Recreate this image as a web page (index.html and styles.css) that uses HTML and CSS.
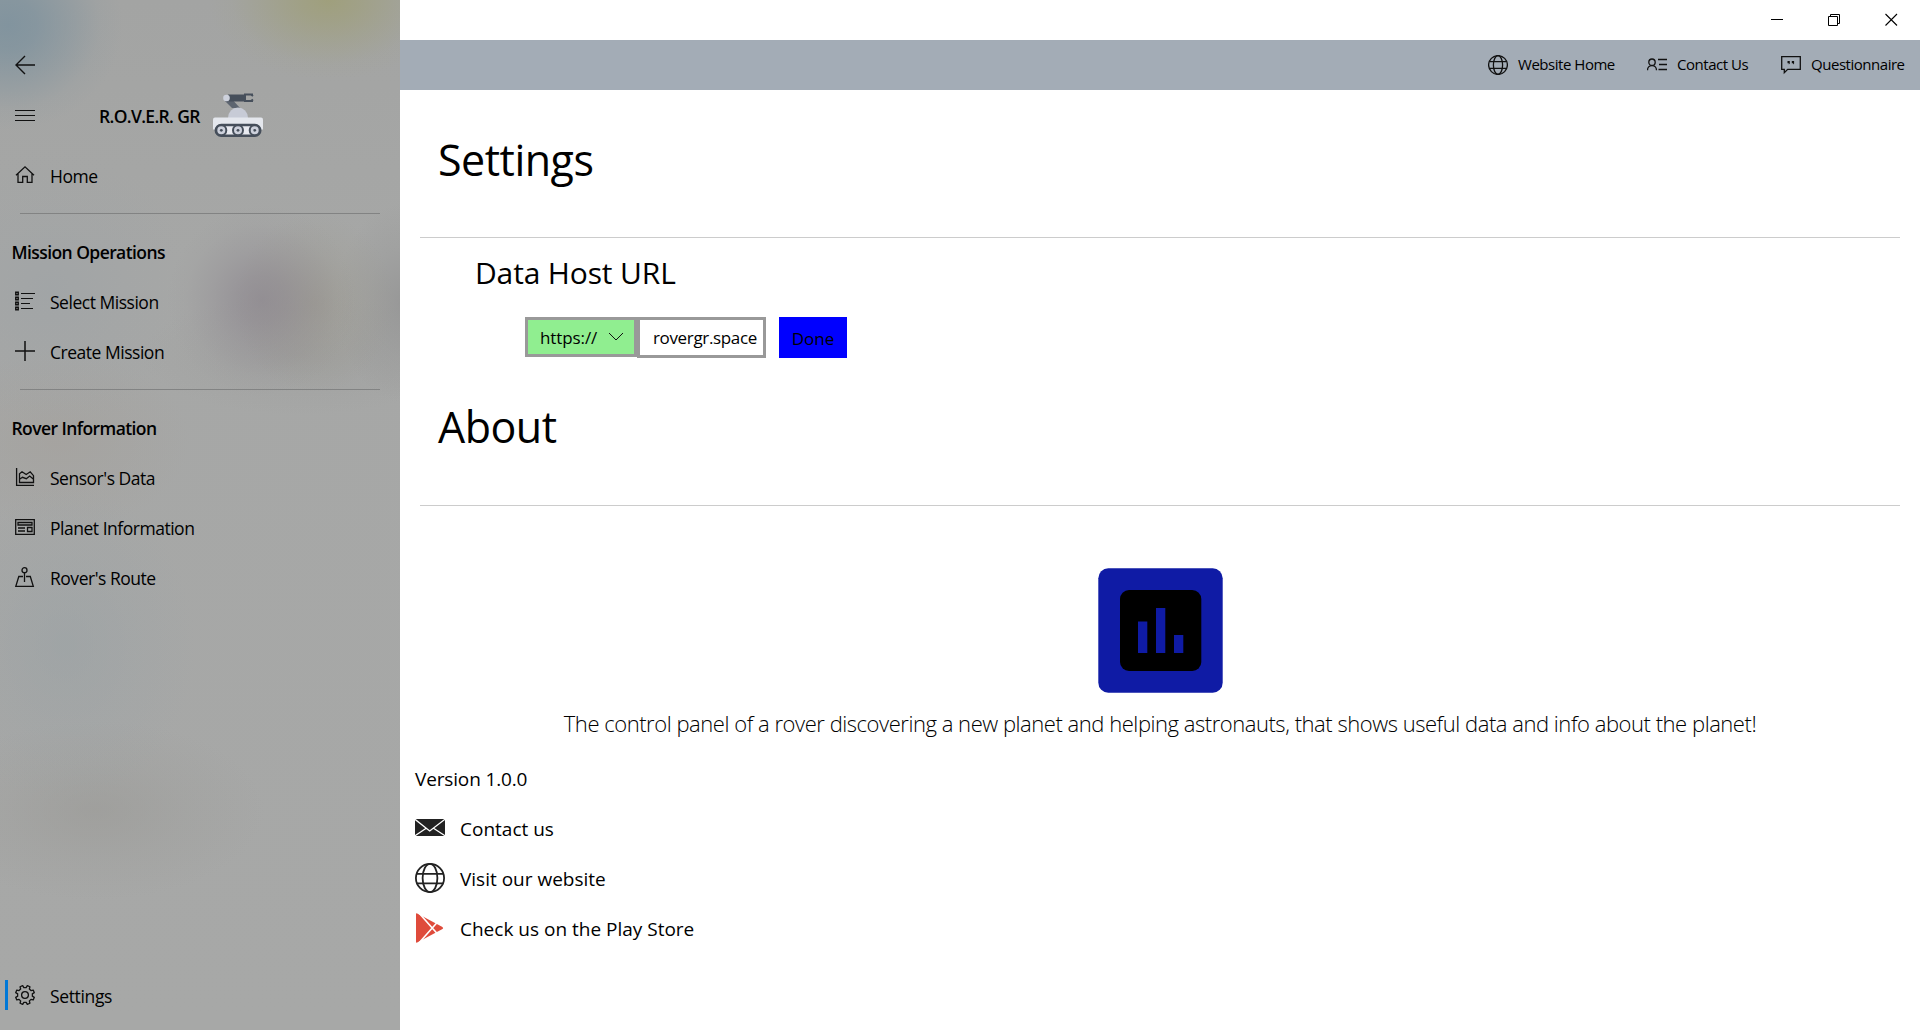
FILE: index.html
```html
<!DOCTYPE html>
<html lang="en">
<head>
<meta charset="utf-8">
<title>R.O.V.E.R. GR</title>
<link rel="stylesheet" href="styles.css">
</head>
<body>
<aside class="sidebar">
  <button class="icon-row back" aria-label="Back"><svg width="20" height="20" viewBox="0 0 20 20"><path d="M1 10H20M10 1L1 10l9 9" stroke-width="1.4"/></svg></button>
  <div class="brand">
    <svg width="20" height="20" viewBox="0 0 20 20"><path d="M0 4.500H20M0 9.500H20M0 14.500H20" stroke-width="1.200"/></svg>
    <span class="brand-name">R.O.V.E.R. GR</span>
    <svg class="rover" width="50" height="44" viewBox="0 0 50 44">
      <path d="M12 8l5-4 10 11h-8z" fill="#5d6570" stroke="none"/>
      <path d="M15 1.500h16v7H16z" fill="#464f5b" stroke="none"/>
      <path d="M40 1.500h-8v6.500h8M38 1.500l2 1.500M38 8l2-1.500" stroke="#464f5b" stroke-width="2"/>
      <circle cx="13.500" cy="5" r="3.300" fill="#cdd1dc" stroke="none"/>
      <path d="M15 25a10 10.500 0 0 1 20 0z" fill="#c7cbd6" stroke="none"/>
      <path d="M2 24.500h46q2 0 2 2v10H0v-10q0-2 2-2z" fill="#e4e7ed" stroke="none"/>
      <rect x="2.800" y="32" width="44.500" height="10.800" rx="5.400" fill="#e8eaf0" stroke="#464f5b" stroke-width="2.400"/>
      <g fill="#cdd1dc" stroke="#464f5b" stroke-width="2"><circle cx="8.300" cy="37.300" r="5"/><circle cx="25" cy="37.300" r="5"/><circle cx="41.700" cy="37.300" r="5"/></g>
      <g fill="#464f5b" stroke="none"><circle cx="8.300" cy="37.300" r="1.400"/><circle cx="25" cy="37.300" r="1.400"/><circle cx="41.700" cy="37.300" r="1.400"/></g>
    </svg>
  </div>
  <nav class="nav">
    <a class="nav-item"><svg width="20" height="20" viewBox="0 0 20 20"><path d="M1 10.200L10 1.800l9 8.400M3 8.700V17.400H7.700V11.500H12.300V17.400H17V8.700"/></svg>Home</a>
    <hr class="nav-line">
    <h2 class="nav-heading">Mission Operations</h2>
    <a class="nav-item"><svg width="20" height="20" viewBox="0 0 20 20"><path d="M6 2.500H20M6 7.500H18M6 12.500H15M6 17.500H18" stroke-width="1.200"/><path d="M.8 1.300h2.400v2.400H.8zM.8 6.300h2.400v2.400H.8zM.8 11.300h2.400v2.400H.8zM.8 16.300h2.400v2.400H.8z" stroke-width="1.500"/></svg>Select Mission</a>
    <a class="nav-item"><svg width="20" height="20" viewBox="0 0 20 20"><path d="M0 10H20M10 0V20" stroke-width="1.500"/></svg>Create Mission</a>
    <hr class="nav-line">
    <h2 class="nav-heading">Rover Information</h2>
    <a class="nav-item"><svg width="20" height="20" viewBox="0 0 20 20"><path d="M1.600 1V18.300H19M4.500 15.500V6.700L7 4.800l4.200 2.700 4-2.700 3.300 3.900V15.500zM4.500 12.300l3-2 3.800 1.400L14.700 9l3.800 3.200"/></svg>Sensor's Data</a>
    <a class="nav-item"><svg width="20" height="20" viewBox="0 0 20 20"><path d="M.7 2.700H19.300V17.300H.7zM3 5.500H17V8H3zM3 11H10M3 14H10M12.500 10.500H17V14.500H12.500z" stroke-width="1.300"/></svg>Planet Information</a>
    <a class="nav-item"><svg width="20" height="20" viewBox="0 0 20 20"><circle cx="9.500" cy="3.200" r="2.500"/><path d="M9.500 5.700V15M8 9.500H3.800L.8 19.300H18.300L15.300 9.500H11"/></svg>Rover's Route</a>
  </nav>
  <a class="nav-item selected"><svg width="20" height="20" viewBox="-10 -10 20 20"><path stroke-linejoin="round" d="M2.320-9.310L4.940-8.230 4.350-5.990Q5.200-5.200 5.990-4.350L8.230-4.940 9.310-2.320 7.310-1.160Q7.500 0 7.310 1.160L9.310 2.320 8.230 4.940 5.990 4.350Q5.200 5.200 4.350 5.990L4.940 8.230 2.320 9.310 1.160 7.310Q0 7.500-1.160 7.310L-2.320 9.310-4.940 8.230-4.350 5.990Q-5.200 5.200-5.990 4.350L-8.230 4.940-9.310 2.320-7.310 1.160Q-7.500 0-7.310-1.160L-9.310-2.320-8.230-4.940-5.990-4.350Q-5.200-5.200-4.350-5.990L-4.940-8.230-2.320-9.310-1.160-7.310Q0-7.500 1.160-7.310z"/><circle r="3.400"/></svg>Settings</a>
</aside>

<main class="main">
  <div class="window-bar">
    <svg width="57" height="40" viewBox="0 0 57 40"><path d="M22 19.500H34" stroke-width="1"/></svg>
    <svg width="57" height="40" viewBox="0 0 57 40"><path d="M22.500 16.500H31.500V25.500H22.500zM24.500 16.500V14.500H33.500V23.500H31.500" stroke-width="1"/></svg>
    <svg width="57" height="40" viewBox="0 0 57 40"><path d="M22.500 14L34 25.500M34 14L22.500 25.500" stroke-width="1.100"/></svg>
  </div>
  <header class="toolbar">
    <a class="tool"><svg width="20" height="20" viewBox="0 0 20 20"><circle cx="10" cy="10" r="9.400"/><ellipse cx="10" cy="10" rx="4.600" ry="9.400"/><path d="M1.300 6.700H18.700M1.300 13.300H18.700"/></svg><span>Website Home</span></a>
    <a class="tool"><svg width="20" height="20" viewBox="0 0 20 20"><circle cx="5" cy="7.200" r="3.200"/><path d="M.5 15.300C.5 9 9.500 9 9.500 15.300M11 4.500H20M12 9.500H20M11.500 14.500H20"/></svg><span>Contact Us</span></a>
    <a class="tool"><svg width="20" height="20" viewBox="0 0 20 20"><path d="M.7 1.700H19.300V14.300H6.700L3.300 17.700V14.300H.7z"/><path d="M6.500 6h2.300v2.500L7.800 9.500V8.300H6.500zM10.800 6h2.300v2.500l-1 1V8.300h-1.300z" fill="#111" stroke="none"/></svg><span>Questionnaire</span></a>
  </header>
  <div class="content">
    <h1 class="title">Settings</h1>
    <hr class="rule">
    <h2 class="subtitle">Data Host URL</h2>
    <div class="host-form">
      <div class="scheme"><span>https://</span><svg width="16" height="10" viewBox="0 0 16 10"><path d="M1 1l7 7 7-7" stroke-width="1"/></svg></div>
      <div class="host">rovergr.space</div>
      <button class="done">Done</button>
    </div>
    <h1 class="title about">About</h1>
    <hr class="rule about-rule">
    <svg class="logo" width="125" height="125" viewBox="0 0 125 125"><rect x=".3" y=".3" width="124.400" height="124.400" rx="10" fill="#0f1ba5" stroke="none"/><rect x="22" y="22" width="81.300" height="81" rx="9" fill="#000" stroke="none"/><path d="M40 53.500h9.300V85H40zM58 40h9.300v45H58zM76 67h9.300v18H76z" fill="#0f1ba5" stroke="none"/></svg>
    <p class="description">The control panel of a rover discovering a new planet and helping astronauts, that shows useful data and info about the planet!</p>
    <div class="links">
      <div class="link"><span class="version">Version 1.0.0</span></div>
      <a class="link"><svg width="30" height="30" viewBox="0 0 30 30"><path d="M0 6H30V23H0z" fill="#222" stroke="none"/><path d="M0 6.300L14.700 18 30 6.300M0 22.800l11.200-7.500M30 22.800l-11.500-7.500" stroke="#fff" stroke-width="1.300"/></svg>Contact us</a>
      <a class="link"><svg width="30" height="30" viewBox="0 0 30 30"><g stroke="#222" stroke-width="1.800"><circle cx="15" cy="15" r="14.100"/><ellipse cx="15" cy="15" rx="7.400" ry="14.100"/><path d="M1.700 10.800H28.300M1.700 20.300H28.300"/></g></svg>Visit our website</a>
      <a class="link"><svg width="30" height="30" viewBox="0 0 30 30"><path d="M1 1Q1 0 2.200.5L27 13.700q2.200 1.300 0 2.600L2.200 29.500Q1 30 1 29z" fill="#df4b3b" stroke="none"/><path d="M3.500-.5L23 21.500M3.500 30.500L23 8.500" stroke="#fff" stroke-width="1.600"/></svg>Check us on the Play Store</a>
    </div>
  </div>
</main>
</body>
</html>
```
FILE: styles.css
```css
* { box-sizing: border-box; }
body {
  margin: 0;
  width: 1920px;
  height: 1030px;
  display: flex;
  overflow: hidden;
  background: #fff;
  color: #000;
  font-family: "Open Sans", "Noto Sans", sans-serif;
}
svg { display: block; flex: none; fill: none; stroke: #111; stroke-width: 1.3; }
h1, h2, p, hr { margin: 0; }
button { border: 0; padding: 0; background: none; font: inherit; }

.sidebar {
  width: 400px;
  flex: none;
  display: flex;
  flex-direction: column;
  padding: 40px 0 9px;
  background:
    radial-gradient(ellipse 115px 105px at 8px 25px, #7a909dd0, #7a909db0 25%, #7a909d60 55%, #7a909d18 80%, #7a909d00),
    radial-gradient(ellipse 120px 80px at 328px 0, #9f9f7af0, #9f9f7ab0 25%, #9f9f7a58 55%, #9f9f7a15 80%, #9f9f7a00),
    radial-gradient(ellipse 95px 95px at 262px 300px, #8b858db0, #8b858d88 25%, #8b858d40 55%, #8b858d10 80%, #8b858d00),
    radial-gradient(ellipse 80px 90px at 315px 303px, #9a978a90, #9a978a38 55%, #9a978a00),
    radial-gradient(ellipse 70px 100px at 405px 303px, #909090b0, #90909040 55%, #90909000),
    radial-gradient(ellipse 160px 60px at 300px 355px, #97979670, #97979628 55%, #97979600),
    radial-gradient(ellipse 140px 140px at 50px 290px, #9ca2a680, #9ca2a630 55%, #9ca2a600),
    radial-gradient(ellipse 130px 160px at 65px 645px, #98a1a580, #98a1a530 55%, #98a1a500),
    radial-gradient(ellipse 170px 90px at 95px 810px, #98979380, #98979330 55%, #98979300),
    radial-gradient(ellipse 130px 90px at 60px 440px, #a4a09b90, #a4a09b40 55%, #a4a09b00),
    linear-gradient(#a3a4a3, #a6a7a6 25%, #a7a8a7);
}
.back { height: 50px; padding-left: 15px; text-align: left; }
.brand {
  height: 61px;
  display: flex;
  padding-left: 15px;
  align-items: flex-start;
}
.brand > svg:first-child { margin-top: 16px; }
.brand-name {
  width: 114px;
  margin-left: 64px;
  line-height: 53px;
  font-size: 17.5px;
  font-weight: 600;
  letter-spacing: -0.65px;
  white-space: nowrap;
}
.rover { margin-top: 3px; }
.nav-item {
  height: 50px;
  flex: none;
  display: flex;
  align-items: center;
  gap: 15px;
  padding-left: 15px;
  font-size: 17.5px;
  letter-spacing: -0.48px;
}
.nav-item svg { margin-bottom: 2px; }
.nav-line { margin: 12px 20px 13px; border: 0; height: 1px; background: #828383; }
.nav-heading {
  height: 50px;
  line-height: 50px;
  padding-left: 11.5px;
  font-size: 17.5px;
  font-weight: 600;
  letter-spacing: -0.58px;
}
.selected {
  margin-top: auto;
  letter-spacing: -0.35px;
  background: linear-gradient(#0078d7, #0078d7) 5px 9px / 3px 30px no-repeat;
}

.main { flex: 1; }
.window-bar { height: 40px; display: flex; justify-content: flex-end; }
.window-bar svg { stroke: #000; }
.toolbar {
  height: 50px;
  display: grid;
  grid-template-columns: 159px 134px 139px;
  justify-content: end;
  background: #a3acb6;
}
.tool { display: flex; align-items: center; gap: 10px; font-size: 15px; letter-spacing: -0.47px; white-space: nowrap; }
.tool span { margin-bottom: 2px; }

.title {
  margin: 40px 0 47px 38px;
  font-size: 43px;
  line-height: 60px;
  font-weight: 400;
  letter-spacing: -0.5px;
}
.rule { height: 1px; border: 0; margin: 0 20px; background: #ccc; }
.subtitle {
  margin: 15px 0 24px 75px;
  font-size: 30px;
  line-height: 40px;
  font-weight: 400;
  letter-spacing: -0.15px;
}
.host-form {
  display: flex;
  align-items: flex-start;
  margin-left: 125px;
  height: 41px;
  font-size: 17px;
  letter-spacing: -0.35px;
}
.scheme {
  width: 112px;
  height: 40px;
  display: flex;
  align-items: center;
  gap: 11px;
  padding-left: 12px;
  border: 3px solid #999;
  background: #90ee90;
  letter-spacing: -0.1px;
}
.host { width: 129px; height: 41px; line-height: 35px; padding-left: 13px; border: 3px solid #999; }
.done { width: 68px; height: 41px; margin-left: 13px; padding-top: 2px; background: #00f; color: #000; }
.title.about { margin: 39px 0 48px 38px; }
.logo { margin: 62px auto 10px 698px; }
.description {
  text-align: center;
  font-size: 22px;
  line-height: 40px;
  font-weight: 300;
  letter-spacing: -0.46px;
  white-space: nowrap;
}
.links { margin: 11px 0 0 15px; font-size: 19px; letter-spacing: 0; }
.link { height: 50px; display: flex; align-items: center; gap: 15px; }
.link svg { margin-bottom: 2px; }
.version { letter-spacing: -0.15px; }
```
